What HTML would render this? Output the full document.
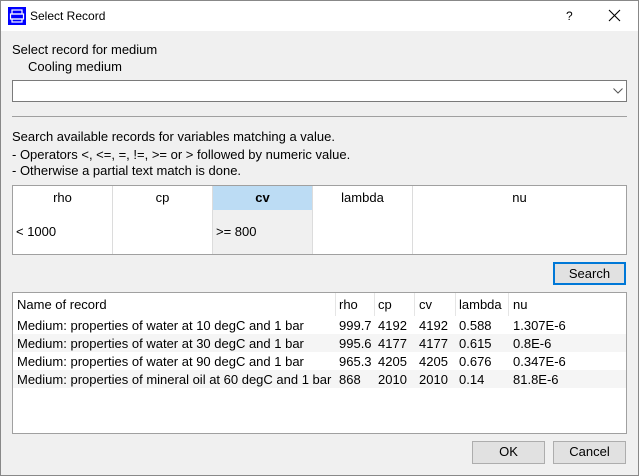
<!DOCTYPE html>
<html><head><style>
*{margin:0;padding:0;box-sizing:border-box}
body{width:639px;height:476px;overflow:hidden;background:#f0f0f0;font-family:"Liberation Sans",sans-serif;font-size:13px;color:#000;position:relative}
.a{position:absolute;white-space:nowrap;line-height:14px}
.title{position:absolute;left:0;top:0;width:639px;height:31px;background:#fff}
.frame{position:absolute;left:0;top:0;width:639px;height:476px;border:1px solid #888;pointer-events:none}
.box{position:absolute;background:#fff}
.btn{position:absolute;background:#e1e1e1;border:1px solid #adadad;text-align:center;line-height:20px}
.vl{position:absolute;width:1px;background:#dcdcdc}
</style></head><body>
<div class="title"></div>
<svg class="a" style="left:8px;top:7px" width="18" height="18" viewBox="0 0 18 18"><rect width="18" height="18" fill="#0000ff"/><rect x="4" y="3" width="10" height="4" fill="none" stroke="#fff" stroke-width="1.2"/><rect x="2.5" y="7" width="13" height="5" fill="none" stroke="#fff" stroke-width="1.2"/><rect x="4" y="12" width="10" height="3" fill="none" stroke="#fff" stroke-width="1.2"/></svg>
<div class="a" style="left:30px;top:9px;font-size:12px">Select Record</div>
<div class="a" style="left:566px;top:9px;font-size:12px">?</div>
<svg class="a" style="left:608px;top:9px" width="13" height="13"><path d="M1 1L12 12M12 1L1 12" stroke="#000" stroke-width="1.1"/></svg>
<div class="a" style="left:12px;top:43px">Select record for medium</div>
<div class="a" style="left:28px;top:60px">Cooling medium</div>
<div class="box" style="left:12px;top:80px;width:615px;height:22px;border:1px solid #7a7a7a"></div>
<svg class="a" style="left:613px;top:88px" width="10" height="6"><path d="M0.5 0.5L5 5L9.5 0.5" stroke="#555" fill="none"/></svg>
<div class="a" style="left:12px;top:116px;width:615px;height:1px;background:#a0a0a0"></div>
<div class="a" style="left:12px;top:130px">Search available records for variables matching a value.</div>
<div class="a" style="left:12px;top:148px">- Operators &lt;, &lt;=, =, !=, &gt;= or &gt; followed by numeric value.</div>
<div class="a" style="left:12px;top:164px">- Otherwise a partial text match is done.</div>
<div class="box" style="left:12px;top:185px;width:615px;height:70px;border:1px solid #a0a0a0"></div>
<div class="a" style="left:213px;top:186px;width:99px;height:24px;background:#bcdcf4"></div>
<div class="a" style="left:213px;top:210px;width:99px;height:44px;background:#f0f0f0"></div>
<div class="vl" style="left:112px;top:186px;height:68px"></div>
<div class="vl" style="left:212px;top:186px;height:68px"></div>
<div class="vl" style="left:312px;top:186px;height:68px"></div>
<div class="vl" style="left:412px;top:186px;height:68px"></div>
<div class="a" style="left:13px;top:191px;width:99px;text-align:center">rho</div>
<div class="a" style="left:113px;top:191px;width:99px;text-align:center">cp</div>
<div class="a" style="left:213px;top:191px;width:99px;text-align:center;font-weight:bold">cv</div>
<div class="a" style="left:313px;top:191px;width:99px;text-align:center">lambda</div>
<div class="a" style="left:413px;top:191px;width:213px;text-align:center">nu</div>
<div class="a" style="left:16px;top:225px">&lt; 1000</div>
<div class="a" style="left:216px;top:225px">&gt;= 800</div>
<div class="btn" style="left:553px;top:262px;width:73px;height:23px;border:2px solid #0078d7;line-height:19px">Search</div>
<div class="box" style="left:12px;top:292px;width:615px;height:142px;border:1px solid #a0a0a0"></div>
<div class="a" style="left:13px;top:334px;width:613px;height:18px;background:#f5f5f5"></div>
<div class="a" style="left:13px;top:370px;width:613px;height:18px;background:#f5f5f5"></div>
<div class="vl" style="left:335px;top:293px;height:23px;background:#e5e5e5"></div>
<div class="vl" style="left:374px;top:293px;height:23px;background:#e5e5e5"></div>
<div class="vl" style="left:414px;top:293px;height:23px;background:#e5e5e5"></div>
<div class="vl" style="left:455px;top:293px;height:23px;background:#e5e5e5"></div>
<div class="vl" style="left:508px;top:293px;height:23px;background:#e5e5e5"></div>
<div class="a" style="left:17px;top:298px">Name of record</div>
<div class="a" style="left:339px;top:298px">rho</div>
<div class="a" style="left:378px;top:298px">cp</div>
<div class="a" style="left:419px;top:298px">cv</div>
<div class="a" style="left:459px;top:298px">lambda</div>
<div class="a" style="left:513px;top:298px">nu</div>
<div class="a" style="left:17px;top:319px">Medium: properties of water at 10 degC and 1 bar</div>
<div class="a" style="left:339px;top:319px">999.7</div><div class="a" style="left:378px;top:319px">4192</div><div class="a" style="left:419px;top:319px">4192</div><div class="a" style="left:459px;top:319px">0.588</div><div class="a" style="left:513px;top:319px">1.307E-6</div>
<div class="a" style="left:17px;top:337px">Medium: properties of water at 30 degC and 1 bar</div>
<div class="a" style="left:339px;top:337px">995.6</div><div class="a" style="left:378px;top:337px">4177</div><div class="a" style="left:419px;top:337px">4177</div><div class="a" style="left:459px;top:337px">0.615</div><div class="a" style="left:513px;top:337px">0.8E-6</div>
<div class="a" style="left:17px;top:355px">Medium: properties of water at 90 degC and 1 bar</div>
<div class="a" style="left:339px;top:355px">965.3</div><div class="a" style="left:378px;top:355px">4205</div><div class="a" style="left:419px;top:355px">4205</div><div class="a" style="left:459px;top:355px">0.676</div><div class="a" style="left:513px;top:355px">0.347E-6</div>
<div class="a" style="left:17px;top:373px">Medium: properties of mineral oil at 60 degC and 1 bar</div>
<div class="a" style="left:339px;top:373px">868</div><div class="a" style="left:378px;top:373px">2010</div><div class="a" style="left:419px;top:373px">2010</div><div class="a" style="left:459px;top:373px">0.14</div><div class="a" style="left:513px;top:373px">81.8E-6</div>
<div class="btn" style="left:472px;top:441px;width:73px;height:23px">OK</div>
<div class="btn" style="left:553px;top:441px;width:73px;height:23px">Cancel</div>
<div class="frame"></div>
</body></html>
